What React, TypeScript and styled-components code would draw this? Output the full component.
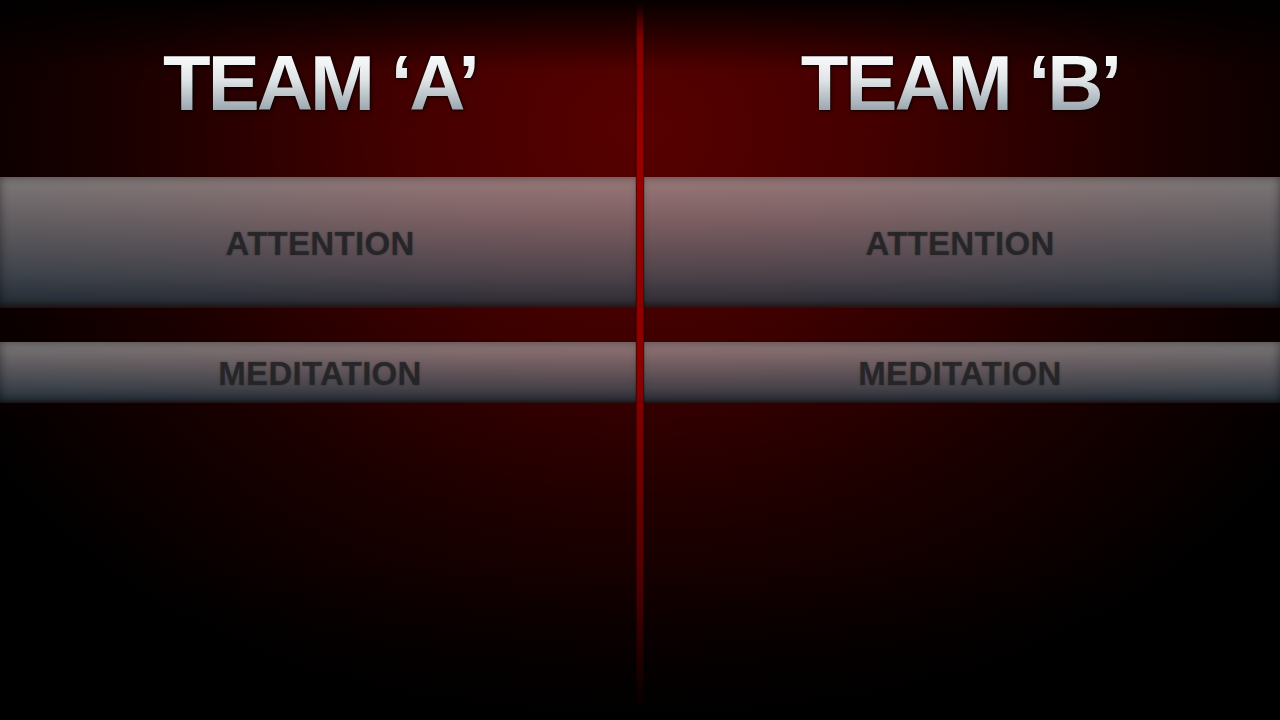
import React from "react";
import styled, { createGlobalStyle } from "styled-components";

const Global = createGlobalStyle`
  html, body { margin: 0; padding: 0; background: #000; }
  body { font-family: "Liberation Sans", Arial, sans-serif; overflow: hidden; }
`;

const Stage = styled.div`
  position: relative;
  width: 1280px;
  height: 720px;
  display: flex;
  flex-direction: row;
  overflow: hidden;
  background:
    linear-gradient(to bottom, rgba(0,0,0,0.9) 0px, rgba(0,0,0,0) 70px),
    linear-gradient(to bottom, rgba(0,0,0,0) 560px, rgba(0,0,0,0.75) 720px),
    radial-gradient(ellipse 780px 620px at 50% 18%, #580000 0%, #440000 30%, #1c0000 65%, #000 100%);
`;

const Column = styled.div<{ $side: "left" | "right" }>`
  flex: 1 1 0;
  display: flex;
  flex-direction: column;
`;

const TitleArea = styled.div`
  height: 177px;
  display: flex;
  align-items: flex-start;
  justify-content: center;
  padding-top: 40px;
  box-sizing: border-box;
`;

const Title = styled.h1`
  margin: 0;
  font-family: "Liberation Sans", Arial, sans-serif;
  font-weight: 700;
  font-size: 78px;
  line-height: 86px;
  letter-spacing: -3px;
  background: linear-gradient(to bottom, #ffffff 12%, #e2e6e8 45%, #8a98a2 90%);
  -webkit-background-clip: text;
  background-clip: text;
  color: transparent;
  filter: drop-shadow(0 0 1px rgba(0,0,0,0.9)) drop-shadow(1px 1px 2px rgba(0,0,0,0.5));
  white-space: nowrap;
`;

const Bar = styled.div<{ $h: number; $mt: number }>`
  height: ${(p) => p.$h}px;
  margin-top: ${(p) => p.$mt}px;
  display: flex;
  align-items: center;
  justify-content: center;
  background: linear-gradient(
    to bottom,
    rgba(200, 200, 200, 0.6) 0%,
    rgba(160, 160, 165, 0.6) 30%,
    rgba(80, 92, 102, 0.72) 75%,
    rgba(45, 58, 70, 0.8) 94%,
    rgba(40, 30, 30, 0.8) 100%
  );
  box-shadow: inset 0 0 10px rgba(0, 0, 0, 0.45);
`;

const Label = styled.span`
  font-family: "Liberation Sans", Arial, sans-serif;
  font-weight: 700;
  font-size: 33px;
  line-height: 1;
  letter-spacing: 0.3px;
  color: rgba(35, 35, 38, 0.88);
  text-shadow: 0 0 2px rgba(0, 0, 0, 0.35);
  margin-top: 2px;
`;

const Divider = styled.div`
  position: absolute;
  left: 635px;
  top: 4px;
  bottom: 8px;
  width: 10px;
  display: flex;
  justify-content: center;
  pointer-events: none;
`;

const DividerLine = styled.div`
  width: 8px;
  height: 100%;
  background: linear-gradient(
    to bottom,
    rgba(150, 0, 0, 0) 0%,
    rgba(150, 0, 0, 0.8) 5%,
    #9a0000 20%,
    #8c0000 50%,
    rgba(110, 0, 0, 0.7) 80%,
    rgba(60, 0, 0, 0) 100%
  );
  box-shadow: 0 0 1px rgba(0,0,0,0.8), inset 1px 0 1px rgba(0,0,0,0.4), inset -1px 0 1px rgba(0,0,0,0.4);
`;

const TeamColumn: React.FC<{ name: string; side: "left" | "right" }> = ({ name, side }) => (
  <Column $side={side}>
    <TitleArea>
      <Title>{name}</Title>
    </TitleArea>
    <Bar $h={131} $mt={0}>
      <Label>ATTENTION</Label>
    </Bar>
    <Bar $h={61} $mt={34}>
      <Label>MEDITATION</Label>
    </Bar>
  </Column>
);

export default function App() {
  return (
    <>
      <Global />
      <Stage>
        <TeamColumn name="TEAM ‘A’" side="left" />
        <TeamColumn name="TEAM ‘B’" side="right" />
        <Divider>
          <DividerLine />
        </Divider>
      </Stage>
    </>
  );
}
